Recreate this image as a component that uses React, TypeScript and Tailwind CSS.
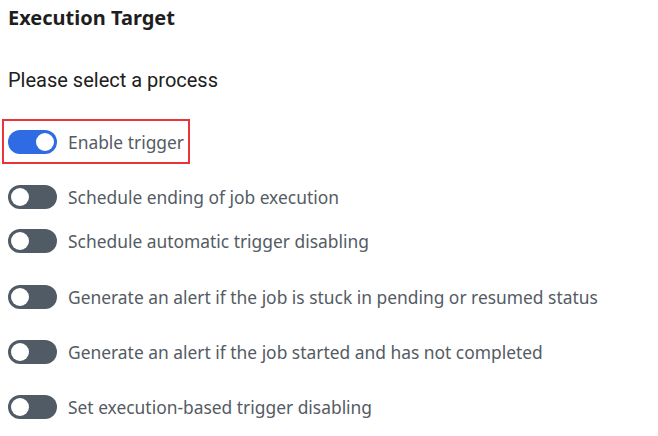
import React from "react";

function Toggle({ on }: { on?: boolean }) {
  return (
    <div
      className={
        "relative h-[24px] w-[49px] shrink-0 rounded-full " +
        (on ? "bg-[#2f6be2]" : "bg-[#505b65]")
      }
    >
      <div
        className={
          "absolute top-[3px] h-[18px] w-[18px] rounded-full bg-white " +
          (on ? "right-[3px]" : "left-[3px]")
        }
      />
    </div>
  );
}

function Row({ label, on, className }: { label: string; on?: boolean; className?: string }) {
  return (
    <div className={"flex h-[24px] items-center gap-[11px] " + (className ?? "")}>
      <Toggle on={on} />
      <span className="whitespace-nowrap text-[17.4px] leading-[24px] text-[#545b63] [font-family:'Noto_Sans',sans-serif]">
        {label}
      </span>
    </div>
  );
}

export default function App() {
  return (
    <div className="min-h-[436px] w-[658px] bg-white px-2 pt-[4px]">
      <h1 className="text-[20px] font-bold leading-[28px] text-[#1e1e1e] [font-family:'Noto_Sans',sans-serif]">
        Execution Target
      </h1>
      <p className="mt-[34px] text-[20px] leading-[28px] text-[#202020] [font-family:Roboto,sans-serif]">
        Please select a process
      </p>
      <div className="-ml-[6px] mt-[25px] flex h-[45px] w-fit items-center gap-[11px] border-2 border-[#ec3438] pl-[4px] pr-[4px]">
        <Toggle on />
        <span className="whitespace-nowrap text-[17.4px] leading-[24px] text-[#545b63] [font-family:'Noto_Sans',sans-serif]">
          Enable trigger
        </span>
      </div>
      <Row className="mt-[21px]" label="Schedule ending of job execution" />
      <Row className="mt-[20px]" label="Schedule automatic trigger disabling" />
      <Row className="mt-[32px]" label="Generate an alert if the job is stuck in pending or resumed status" />
      <Row className="mt-[31px]" label="Generate an alert if the job started and has not completed" />
      <Row className="mt-[31px]" label="Set execution-based trigger disabling" />
    </div>
  );
}
